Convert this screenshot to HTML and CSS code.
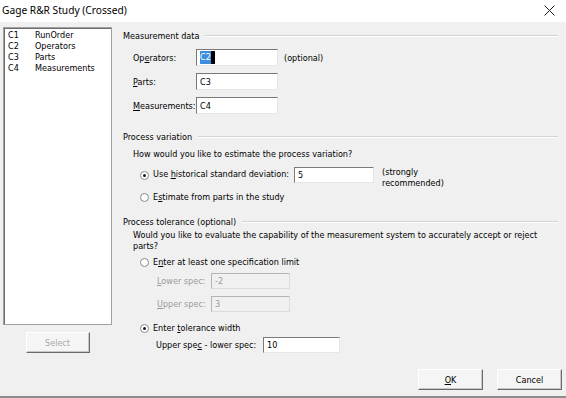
FILE: index.html
```html
<!DOCTYPE html>
<html lang="en">
<head>
  <meta charset="UTF-8">
  <title>Gage R&amp;R Study (Crossed)</title>
  <link rel="stylesheet" href="styles.css">
</head>
<body>

  <div class="titlebar">
    <span class="title">Gage R&amp;R Study (Crossed)</span>
    <svg class="close" width="11" height="11" viewBox="0 0 11 11">
      <path d="M0.5 0.5 L10.5 10.5 M10.5 0.5 L0.5 10.5" stroke="#1a1a1a" stroke-width="1"/>
    </svg>
  </div>

  <div class="dialog">
    <div class="main">

      <div class="left">
        <div class="varlist">
          <div class="var"><span class="col">C1</span><span>RunOrder</span></div>
          <div class="var"><span class="col">C2</span><span>Operators</span></div>
          <div class="var"><span class="col">C3</span><span>Parts</span></div>
          <div class="var"><span class="col">C4</span><span>Measurements</span></div>
        </div>
        <div class="btn btn-select disabled">Select</div>
      </div>

      <div class="right">
        <div class="group-head"><span>Measurement data</span></div>

        <div class="field-row first">
          <span class="lbl lbl-meas">Op<u>e</u>rators:</span>
          <div class="box box-meas"><span class="sel">C2</span><span class="caret"></span></div>
          <span class="note">(optional)</span>
        </div>
        <div class="field-row">
          <span class="lbl lbl-meas"><u>P</u>arts:</span>
          <div class="box box-meas">C3</div>
        </div>
        <div class="field-row">
          <span class="lbl lbl-meas"><u>M</u>easurements:</span>
          <div class="box box-meas">C4</div>
        </div>

        <div class="group-head gh-variation"><span>Process variation</span></div>
        <p class="question q-variation">How would you like to estimate the process variation?</p>

        <div class="radio-row r-hist">
          <span class="radio checked"></span>
          <span class="lbl lbl-hist">Use <u>h</u>istorical standard deviation:</span>
          <div class="box box-hist">5</div>
          <span class="note note-hist">(strongly<br>recommended)</span>
        </div>
        <div class="radio-row r-est">
          <span class="radio"></span>
          <span>E<u>s</u>timate from parts in the study</span>
        </div>

        <div class="group-head gh-tolerance"><span>Process tolerance (optional)</span></div>
        <p class="question q-tolerance">Would you like to evaluate the capability of the measurement system to accurately accept or reject parts?</p>

        <div class="radio-row r-limit">
          <span class="radio"></span>
          <span>E<u>n</u>ter at least one specification limit</span>
        </div>
        <div class="field-row spec-row r-lower">
          <span class="lbl lbl-spec dim"><u>L</u>ower spec:</span>
          <div class="box box-spec disabled">-2</div>
        </div>
        <div class="field-row spec-row r-upper">
          <span class="lbl lbl-spec dim"><u>U</u>pper spec:</span>
          <div class="box box-spec disabled">3</div>
        </div>

        <div class="radio-row r-width">
          <span class="radio checked"></span>
          <span>Enter <u>t</u>olerance width</span>
        </div>
        <div class="field-row width-row">
          <span class="lbl lbl-width">Upper spe<u>c</u> - lower spec:</span>
          <div class="box box-width">10</div>
        </div>
      </div>

    </div>

    <div class="actions">
      <div class="btn"><u>O</u>K</div>
      <div class="btn">Cancel</div>
    </div>
  </div>

</body>
</html>
```

FILE: styles.css
```css
body {
  margin: 0;
  padding: 0;
  width: 566px;
  height: 398px;
  overflow: hidden;
  background-color: #f0f0f0;
  font-family: "DejaVu Sans Condensed", "DejaVu Sans", sans-serif;
  font-stretch: condensed;
  font-size: 9px;
  color: #000;
}

.titlebar {
  height: 22px;
  background-color: #ffffff;
  display: flex;
  align-items: center;
  justify-content: space-between;
  padding: 0 11px 0 2px;
}

.title {
  font-family: "Noto Sans", sans-serif;
  font-stretch: normal;
  font-size: 10.2px;
  color: #000;
  margin-top: -3px;
}

.close {
  margin-top: -1px;
}

.dialog {
  height: 376px;
  box-sizing: border-box;
  border-bottom: 2px solid #8c8c8c;
  display: flex;
  flex-direction: column;
}

.main {
  display: flex;
  padding-left: 3px;
}

/* variable list */
.left {
  width: 109px;
  padding-top: 5px;
  display: flex;
  flex-direction: column;
  align-items: center;
}

.varlist {
  width: 109px;
  height: 298px;
  box-sizing: border-box;
  background-color: #fff;
  border: 1px solid #a0a0a0;
  box-shadow: inset 1px 1px 0 #6e6e6e;
  padding: 2px 0 0 4px;
}

.var {
  display: flex;
  line-height: 11px;
}

.var .col {
  width: 27px;
}

.btn {
  width: 64px;
  height: 21px;
  box-sizing: border-box;
  background-color: #f5f5f5;
  border: 1px solid;
  border-color: #ffffff #6a6a6a #6a6a6a #ffffff;
  box-shadow: inset -1px -1px 0 #c8c8c8;
  display: flex;
  align-items: center;
  justify-content: center;
  color: #000;
}

.btn.disabled {
  color: #a8a8a8;
}

.btn-select {
  margin-top: 7px;
}

/* right side */
.right {
  width: 435px;
  margin-left: 11px;
  padding-top: 8px;
}

.group-head {
  display: flex;
  align-items: center;
  height: 12px;
  line-height: 12px;
}

.group-head::after {
  content: "";
  flex: 1;
  margin-left: 6px;
  height: 0;
  border-top: 1px solid #d2d2d2;
  border-bottom: 1px solid #ffffff;
}

.gh-variation {
  margin-top: 17px;
}

.gh-tolerance {
  margin-top: 13px;
}

.field-row {
  display: flex;
  align-items: center;
  height: 17px;
  margin-top: 7px;
  padding-left: 10px;
}

.lbl-meas {
  width: 63px;
}

.box {
  height: 17px;
  box-sizing: border-box;
  background-color: #fff;
  border: 1px solid;
  border-color: #7a7a7a #e6e6e6 #e6e6e6 #7a7a7a;
  padding: 0 3px;
  display: flex;
  align-items: center;
}

.box.disabled {
  background-color: #f0f0f0;
  border-color: #b4b4b4 #dcdcdc #dcdcdc #b4b4b4;
  color: #9a9a9a;
}

.box-meas {
  width: 82px;
}

.sel {
  background-color: #3b8de0;
  color: #fff;
  line-height: 13px;
}

.caret {
  width: 4px;
  height: 13px;
  background-color: #000;
}

.note {
  margin-left: 6px;
}

.question {
  margin: 6px 0 0 10px;
  line-height: 11px;
}

.q-tolerance {
  width: 410px;
  margin-top: 2px;
}

.radio-row {
  display: flex;
  align-items: center;
  padding-left: 17px;
  height: 12px;
}

.radio {
  width: 9px;
  height: 9px;
  box-sizing: border-box;
  border: 1px solid #8a8a8a;
  border-radius: 50%;
  background-color: #fff;
  margin-right: 4px;
  position: relative;
}

.radio.checked::after {
  content: "";
  position: absolute;
  left: 2px;
  top: 2px;
  width: 3px;
  height: 3px;
  border-radius: 50%;
  background-color: #1a1a1a;
}

.r-hist {
  height: 22px;
  align-items: flex-start;
  margin-top: 7px;
}

.r-hist .radio {
  margin-top: 4px;
}

.r-hist .lbl-hist {
  width: 141px;
  margin-top: 2px;
}

.box-hist {
  width: 80px;
  height: 16px;
}

.note-hist {
  margin-left: 8px;
  line-height: 11px;
}

.r-est {
  margin-top: 2px;
}

.r-limit {
  margin-top: 4px;
}

.spec-row {
  padding-left: 34px;
  height: 16px;
}

.r-lower {
  margin-top: 5px;
}

.lbl-spec {
  width: 54px;
}

.dim {
  color: #9a9a9a;
}

.box-spec {
  width: 79px;
  height: 16px;
}

.r-width {
  margin-top: 10px;
}

.width-row {
  padding-left: 33px;
  height: 16px;
  margin-top: 3px;
}

.lbl-width {
  width: 107px;
}

.box-width {
  width: 77px;
  height: 16px;
}

.actions {
  margin-top: auto;
  display: flex;
  justify-content: flex-end;
  gap: 14px;
  padding: 0 4px 6px 0;
}

.actions .btn {
  width: 65px;
}
```
